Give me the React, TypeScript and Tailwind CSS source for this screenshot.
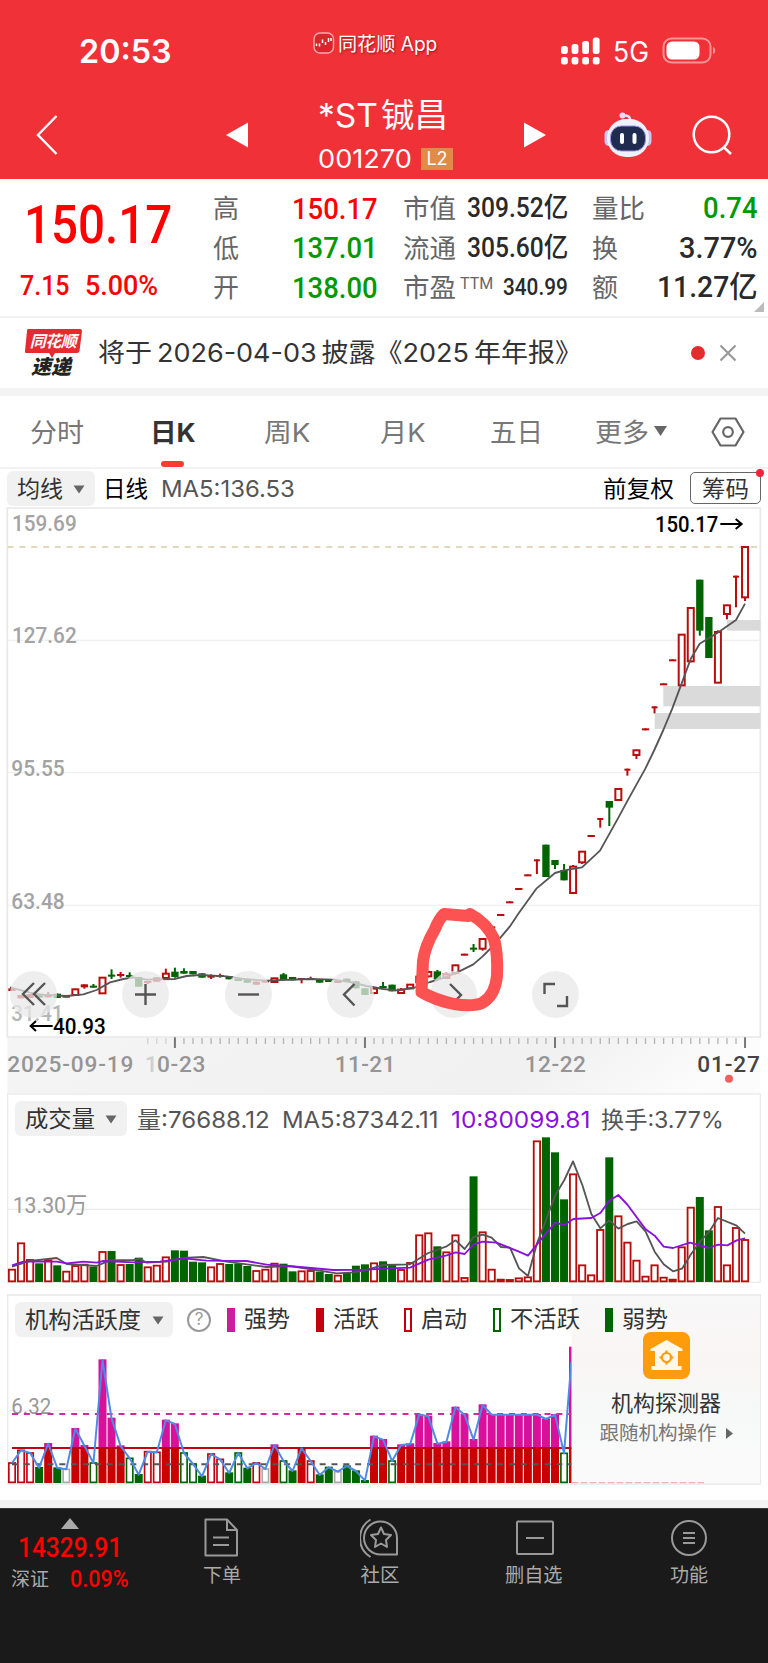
import { useLayoutEffect, useRef, useState } from "react";
import type { ReactNode } from "react";

// Text squeezed or stretched to a fixed width, like the condensed digits of the quote font
function Fit({ w, className = "", children }: { w: number; className?: string; children: ReactNode }) {
  const ref = useRef<HTMLSpanElement>(null);
  const [scale, setScale] = useState(1);

  useLayoutEffect(() => {
    if (ref.current) setScale(w / ref.current.offsetWidth);
  }, [w, children]);

  return (
    <span className={`inline-block shrink-0 leading-none ${className}`} style={{ width: w }}>
      <span ref={ref} className="inline-block whitespace-nowrap origin-left" style={{ transform: `scaleX(${scale})` }}>
        {children}
      </span>
    </span>
  );
}

function Caret({ className = "" }: { className?: string }) {
  return (
    <svg viewBox="0 0 12 9" className={`shrink-0 w-3 h-[9px] ${className}`}>
      <path d="M0.5 0.5h11L6 8.5z" fill="#666" />
    </svg>
  );
}

// All charts use 3 units per pixel; candle i is centred at cx(i)
const cx = (i: number) => 36 + 27.15 * i;

// [kind, body top, body bottom, high, low]  g = falling, r = small rising, t = flat top with wick, h = hollow rising
type Candle = [string, number, number, number, number];
const candles: Candle[] = [
  ["r", 1465, 1473, 1465, 1473], ["r", 1485, 1495, 1485, 1495], ["r", 1482, 1494, 1482, 1494], ["g", 1481, 1493, 1481, 1493],
  ["r", 1483, 1492, 1476, 1492], ["g", 1481, 1494, 1481, 1494], ["r", 1487, 1492, 1487, 1492], ["h", 1466, 1486, 1466, 1486],
  ["r", 1453, 1462, 1453, 1466], ["g", 1457, 1461, 1452, 1463], ["h", 1431, 1481, 1431, 1481], ["g", 1424, 1429, 1408, 1437],
  ["r", 1422, 1428, 1416, 1433], ["g", 1425, 1430, 1417, 1432], ["g", 1431, 1460, 1431, 1460], ["r", 1443, 1449, 1443, 1452],
  ["r", 1432, 1445, 1432, 1445], ["h", 1419, 1435, 1406, 1438], ["g", 1415, 1431, 1403, 1433], ["g", 1413, 1421, 1405, 1421],
  ["g", 1413, 1423, 1413, 1423], ["g", 1420, 1433, 1420, 1433], ["r", 1427, 1432, 1423, 1437], ["r", 1425, 1430, 1421, 1433],
  ["g", 1429, 1438, 1429, 1438], ["g", 1436, 1443, 1436, 1443], ["g", 1436, 1448, 1436, 1448], ["r", 1445, 1454, 1445, 1454],
  ["r", 1442, 1448, 1442, 1448], ["h", 1433, 1447, 1433, 1449], ["g", 1423, 1440, 1419, 1440], ["g", 1431, 1441, 1431, 1441],
  ["r", 1434, 1440, 1434, 1450], ["r", 1434, 1439, 1430, 1439], ["g", 1440, 1448, 1440, 1448], ["g", 1439, 1446, 1439, 1446],
  ["r", 1443, 1449, 1443, 1449], ["g", 1436, 1446, 1436, 1446], ["g", 1444, 1465, 1444, 1465], ["g", 1465, 1485, 1465, 1485],
  ["h", 1464, 1480, 1464, 1483], ["g", 1458, 1464, 1446, 1464], ["g", 1454, 1474, 1454, 1474], ["h", 1467, 1480, 1464, 1480],
  ["h", 1452, 1466, 1452, 1466], ["h", 1428, 1448, 1424, 1448], ["h", 1414, 1430, 1412, 1432], ["g", 1414, 1438, 1410, 1441],
  ["h", 1421, 1435, 1417, 1437], ["h", 1394, 1420, 1394, 1424], ["r", 1361, 1366, 1361, 1366], ["g", 1343, 1348, 1332, 1356],
  ["h", 1315, 1347, 1315, 1352], ["r", 1279, 1284, 1279, 1284], ["r", 1242, 1247, 1242, 1247], ["r", 1204, 1209, 1204, 1209],
  ["r", 1164, 1169, 1164, 1169], ["r", 1123, 1128, 1123, 1128], ["t", 1078, 1083, 1078, 1122], ["g", 1034, 1131, 1034, 1131],
  ["g", 1080, 1095, 1080, 1107], ["g", 1110, 1141, 1092, 1141], ["h", 1098, 1180, 1095, 1180], ["h", 1053, 1088, 1053, 1092],
  ["r", 1005, 1010, 1005, 1010], ["t", 954, 959, 954, 983], ["g", 903, 923, 903, 978], ["h", 865, 901, 865, 901],
  ["t", 806, 811, 806, 827], ["h", 749, 766, 749, 777], ["r", 685, 691, 685, 691], ["t", 619, 625, 619, 640],
  ["r", 550, 555, 550, 555], ["r", 478, 483, 478, 483], ["h", 402, 557, 402, 557], ["h", 322, 485, 322, 487],
  ["g", 239, 392, 239, 407], ["g", 351, 474, 351, 474], ["h", 394, 549, 391, 549], ["h", 314, 343, 314, 358],
  ["t", 227, 232, 227, 322], ["h", 139, 293, 139, 303],
];

const priceMa =
  "30,1462 90,1478 117,1484 200,1488 250,1483 290,1470 330,1447 370,1437 400,1432 440,1439 523,1437 560,1428 600,1425 680,1429 740,1438 800,1442 930,1437 1000,1439 1050,1446 1100,1458 1150,1467 1190,1471 1240,1464 1290,1446 1312,1440 1366,1420 1420,1393 1447,1370 1470,1347 1502,1312 1529,1280 1556,1240 1610,1165 1665,1119 1692,1111 1746,1102 1800,1052 1854,955 1881,905 1936,806 1963,750 1990,690 2017,625 2045,550 2072,477 2099,431 2153,398 2208,360 2235,311";

// [colour, bar top]
const volumes: [string, number][] = [
  ["r", 552], ["r", 473], ["r", 523], ["g", 535], ["r", 524], ["g", 541], ["r", 558], ["r", 541], ["r", 537], ["g", 545],
  ["r", 499], ["g", 498], ["r", 538], ["g", 537], ["g", 518], ["r", 545], ["r", 540], ["r", 515], ["g", 496], ["g", 497],
  ["g", 530], ["g", 532], ["r", 545], ["r", 535], ["g", 537], ["g", 536], ["g", 543], ["r", 556], ["r", 552], ["r", 534],
  ["g", 536], ["g", 559], ["r", 557], ["r", 556], ["g", 560], ["g", 567], ["r", 570], ["g", 563], ["g", 542], ["g", 538],
  ["r", 533], ["g", 529], ["g", 538], ["r", 553], ["r", 532], ["r", 449], ["r", 443], ["g", 484], ["r", 500], ["r", 449],
  ["r", 577], ["g", 274], ["r", 440], ["r", 552], ["r", 582], ["r", 583], ["r", 578], ["r", 575], ["r", 167], ["g", 157],
  ["g", 202], ["g", 343], ["r", 266], ["r", 539], ["r", 569], ["r", 433], ["g", 217], ["r", 392], ["r", 471], ["r", 525],
  ["r", 573], ["r", 539], ["r", 576], ["r", 582], ["r", 485], ["r", 366], ["g", 336], ["g", 436], ["r", 364], ["r", 539],
  ["r", 427], ["r", 463],
];

const volMa5 =
  "36,545 90,528 170,519 200,537 290,543 330,526 400,525 420,521 440,533 500,530 550,519 610,516 680,530 800,546 870,543 1010,565 1060,562 1100,555 1150,540 1230,538 1285,504 1340,484 1367,466 1394,492 1421,456 1448,449 1475,458 1503,486 1530,488 1557,550 1584,573 1611,475 1638,405 1666,330 1693,285 1719,229 1747,300 1774,387 1801,430 1828,406 1855,431 1883,417 1910,409 1937,440 1964,500 1991,538 2019,559 2046,551 2073,508 2100,470 2127,441 2154,399 2210,422 2235,446";
const volMa10 =
  "36,541 70,530 170,530 200,535 250,530 290,533 310,528 400,532 480,530 550,520 620,527 740,528 800,539 900,546 1000,555 1100,554 1170,550 1230,548 1285,524 1340,511 1367,502 1394,507 1421,478 1448,470 1490,473 1557,500 1584,512 1611,478 1638,445 1666,413 1693,420 1720,402 1774,399 1801,384 1828,347 1855,330 1883,360 1937,433 1964,452 1991,485 2019,489 2070,473 2127,489 2154,479 2182,481 2210,466 2235,460";

// m = strong, s = start (hollow red), i = inactive (hollow green), g = weak, w = none
const activity: [string, number][] = [
  ["s", 532], ["s", 494], ["s", 502], ["g", 546], ["m", 474], ["g", 547], ["w", 551], ["m", 429], ["m", 480], ["i", 532],
  ["m", 223], ["m", 398], ["m", 481], ["i", 518], ["g", 567], ["s", 498], ["s", 500], ["m", 404], ["m", 415], ["i", 502],
  ["i", 535], ["g", 572], ["s", 505], ["s", 521], ["g", 562], ["i", 502], ["g", 548], ["s", 532], ["w", 550], ["m", 478],
  ["i", 526], ["g", 556], ["m", 488], ["s", 526], ["g", 568], ["g", 545], ["w", 558], ["g", 541], ["g", 556], ["g", 585],
  ["m", 452], ["m", 462], ["i", 526], ["m", 478], ["m", 475], ["m", 387], ["m", 392], ["m", 474], ["m", 469], ["m", 365],
  ["m", 387], ["m", 462], ["m", 358], ["m", 387], ["m", 387], ["m", 387], ["m", 387], ["m", 387], ["m", 387], ["m", 400],
  ["m", 387], ["i", 503],
];
const outline: Record<string, string> = { s: "#c4000f", i: "#006400", w: "#aaaaaa" };

function PriceChart() {
  return (
    <svg viewBox="0 21 2304 1758" className="block w-[768px] h-[586px]">
      <defs>
        <linearGradient id="axis" x1="0" x2="1" y1="0" y2="0.1">
          <stop offset="0" stopColor="#f4f4f4" />
          <stop offset="0.75" stopColor="#f1f1f1" />
          <stop offset="1" stopColor="#fcfcfc" />
        </linearGradient>
      </defs>
      <rect x="22" y="1612" width="2259" height="168" fill="url(#axis)" />
      <g fill="none" stroke="#e8e8e8" strokeWidth="5">
        <path d="M22 24H2281V1611H22z" />
        <path d="M22 421H2281M22 818H2281M22 1216H2281" stroke="#f0f0f0" strokeWidth="4" />
      </g>
      <g fill="#dadada">
        <rect x="2181" y="360" width="100" height="32" />
        <rect x="1990" y="558" width="291" height="61" />
        <rect x="1964" y="639" width="317" height="48" />
      </g>
      <path d="M23 141H2281" stroke="#dccba6" strokeWidth="4" strokeDasharray="18 17.4" />

      <g fontFamily="Roboto" fontSize="67" fontWeight="500" fill="#a3a3a3">
        <text x="36" y="94" textLength="194" lengthAdjust="spacingAndGlyphs">159.69</text>
        <text x="36" y="430" textLength="194" lengthAdjust="spacingAndGlyphs">127.62</text>
        <text x="34" y="828" textLength="160" lengthAdjust="spacingAndGlyphs">95.55</text>
        <text x="34" y="1226" textLength="160" lengthAdjust="spacingAndGlyphs">63.48</text>
        <text x="34" y="1562" textLength="156" lengthAdjust="spacingAndGlyphs" fill="#b5b5b5">31.41</text>
      </g>

      {candles.map(([kind, top, bottom, high, low], i) => {
        const x = cx(i);
        const color = kind === "g" ? "#006400" : "#b90c0c";
        if (kind === "h") {
          return (
            <g key={i} stroke={color} strokeWidth="6" fill="#fff">
              <path d={`M${x} ${high}V${low}`} />
              <rect x={x - 9} y={top + 2} width="18" height={bottom - top - 3} />
            </g>
          );
        }
        const half = kind === "t" ? 9 : 11;
        return (
          <g key={i} fill={color}>
            <rect x={x - half} y={top} width={half * 2} height={Math.max(bottom - top, 6)} />
            <rect x={x - 3} y={high} width="6" height={low - high} />
          </g>
        );
      })}
      <polyline points={priceMa} fill="none" stroke="#555" strokeWidth="5.5" strokeLinejoin="round" />

      <g fontFamily="Roboto" fontWeight="500" fontSize="68" fill="#000">
        <text x="1965" y="97" textLength="190" lengthAdjust="spacingAndGlyphs">150.17</text>
        <text x="159" y="1602" textLength="158" lengthAdjust="spacingAndGlyphs">40.93</text>
      </g>
      <g fill="none" stroke="#000" strokeWidth="6">
        <path d="M2161 72H2225M2207 57L2225 72L2207 87" />
        <path d="M158 1578H92M108 1563L92 1578L108 1593" />
      </g>

      {/* Date axis */}
      <g stroke="#b4b4b4" strokeWidth="4">
        {candles.map((_, i) =>
          i < 15 ? null : (
            <path key={i} d={`M${cx(i)} 1614V1632`} opacity={i < 18 ? 0.5 : 1} />
          )
        )}
        {[18, 39, 60, 81].map((i) => (
          <path key={i} d={`M${cx(i)} 1612V1644`} stroke="#777" strokeWidth="6" />
        ))}
      </g>
      <g fontFamily="Roboto" fontSize="68" fontWeight="500" fill="#959595">
        <text x="22" y="1717" textLength="378" lengthAdjust="spacing">2025-09-19</text>
        <text x="434" y="1717" fill="#cfcfcf">1</text>
        <text x="471" y="1717" textLength="145" lengthAdjust="spacing">0-23</text>
        <text x="1004" y="1717" textLength="182" lengthAdjust="spacing">11-21</text>
        <text x="1574" y="1717" textLength="184" lengthAdjust="spacing">12-22</text>
        <text x="2092" y="1717" textLength="188" lengthAdjust="spacing" fill="#444">01-27</text>
      </g>
      <circle cx="2187" cy="1736" r="12" fill="#ef6060" />
    </svg>
  );
}

const tools = [
  { left: "left-[10px]", d: "M35 20L24 31L35 42M24 20L13 31L24 42", vb: "0 8 47 47" },
  { left: "left-[122px]", d: "M13 23.5H34M23.5 13V34", vb: "0 0 47 47" },
  { left: "left-[225px]", d: "M13 23.5H34", vb: "0 0 47 47" },
  { left: "left-[327px]", d: "M27.5 13L17 23.5L27.5 34.5", vb: "0 0 47 47" },
  { left: "left-[430px]", d: "M20 13L31 24L20 35", vb: "0 0 47 47" },
  { left: "left-[532px]", d: "M12.5 23V13H23M25 35H35V25", vb: "0 0 47 47" },
];

function VolumeChart() {
  return (
    <svg viewBox="0 24 2304 600" className="block w-[768px] h-[200px]">
      <g fill="none" stroke="#ebebeb" strokeWidth="4">
        <path d="M23 27V592H2281V27z" />
        <path d="M23 373H2281" />
      </g>
      <text x="38" y="383" fontFamily="Roboto, 'Noto Sans CJK SC'" fontSize="68" fill="#999" textLength="224" lengthAdjust="spacingAndGlyphs">
        13.30万
      </text>
      {volumes.map(([kind, top], i) =>
        kind === "g" ? (
          <rect key={i} x={cx(i) - 12} y={top} width="24" height={591 - top} fill="#006400" />
        ) : (
          <rect key={i} x={cx(i) - 9.5} y={top + 2} width="19" height={Math.max(587 - top, 4)} fill="#fff" stroke="#b90c0c" strokeWidth="5.5" />
        )
      )}
      <g fill="none" strokeWidth="5.5" strokeLinejoin="round">
        <polyline points={volMa5} stroke="#555" />
        <polyline points={volMa10} stroke="#8a10dc" />
      </g>
    </svg>
  );
}

function ActivityChart() {
  return (
    <svg viewBox="0 24 2304 582" className="block w-[768px] h-[194px]">
      <defs>
        <linearGradient id="promo" x1="0" x2="0" y1="0" y2="1">
          <stop offset="0" stopColor="#f8f8f8" />
          <stop offset="0.36" stopColor="#faf5f5" />
          <stop offset="0.6" stopColor="#f6f9f8" />
          <stop offset="0.85" stopColor="#fafafa" />
          <stop offset="1" stopColor="#fafafa" />
        </linearGradient>
      </defs>
      <g fill="none" stroke="#e8e8e8" strokeWidth="4">
        <path d="M23 30H2281V597H23z" />
        <path d="M23 377H2281" stroke="#f0f0f0" />
      </g>
      <text x="34" y="386" fontFamily="Roboto" fontSize="68" fill="#999" textLength="120" lengthAdjust="spacingAndGlyphs">
        6.32
      </text>
      {activity.map(([kind, top], i) => {
        const x = cx(i);
        if (kind === "m") {
          return (
            <g key={i}>
              <rect x={x - 12} y={top} width="24" height={490 - top} fill="#d8109c" />
              <rect x={x - 12} y="489" width="24" height="105" fill="#c80000" />
            </g>
          );
        }
        if (kind === "g") return <rect key={i} x={x - 12} y={top} width="24" height={594 - top} fill="#006400" />;
        return <rect key={i} x={x - 9.5} y={top + 2} width="19" height={590 - top} fill="#fff" stroke={outline[kind]} strokeWidth="5" />;
      })}
      <rect x="1707" y="185" width="8" height="304" fill="#d8109c" />
      <rect x="1707" y="489" width="8" height="105" fill="#c80000" />
      <g fill="none" strokeWidth="6">
        <path d="M36 489H1715" stroke="#c4000f" />
        <path d="M36 387H1715" stroke="#cf2aa0" strokeDasharray="18 17.5" />
        <path d="M36 538H1715" stroke="#555" strokeDasharray="18 17.5" />
        <polyline
          points={activity.map(([, top], i) => `${cx(i)},${top + 2}`).join(" ") + " 1714,230"}
          stroke="#4f8be6"
          strokeLinejoin="round"
        />
      </g>
      <rect x="1715" y="33" width="564" height="562" fill="url(#promo)" />
      <path d="M1715 593H2112" stroke="#eab4b8" strokeWidth="4" strokeDasharray="20 7" />
    </svg>
  );
}

function Robot() {
  return (
    <svg viewBox="0 0 48 46" className="shrink-0 w-12 h-[46px]">
      <circle cx="18.5" cy="3.5" r="3" fill="#e6dcf8" />
      <path d="M19 3.5C24 3 26.5 5 26 9" fill="none" stroke="#dfe0f5" strokeWidth="2.5" />
      <rect x="0.5" y="18" width="9" height="16" rx="4.5" fill="#c9c6f3" />
      <rect x="38.5" y="18" width="9" height="16" rx="4.5" fill="#c9c6f3" />
      <rect x="3" y="7" width="42" height="38" rx="19" fill="#eef0fb" />
      <rect x="6.5" y="14" width="35" height="25" rx="11" fill="#1f2c50" stroke="#9a8fe8" strokeWidth="1" />
      <rect x="16" y="21" width="4" height="11" rx="2" fill="#fff" />
      <rect x="28.5" y="21" width="4" height="11" rx="2" fill="#fff" />
    </svg>
  );
}

const signal = [
  { x: 0, y: 9, h: 8 },
  { x: 10.6, y: 7, h: 10 },
  { x: 21.2, y: 4, h: 13 },
  { x: 31.8, y: 0.5, h: 16.5 },
];

function Header() {
  return (
    <div className="h-[179px] shrink-0 bg-[#f03138] text-white">
      {/* Status bar */}
      <div className="h-[90px] flex items-start">
        <Fit w={93} className="ml-[79px] mt-[35px] text-[33px] font-semibold">20:53</Fit>
        <svg viewBox="0 0 22 22" className="ml-[141px] mt-8 w-[22px] h-[22px]">
          <rect x="1" y="1" width="19.5" height="20" rx="6" fill="#d9252c" stroke="#f9a9ac" strokeWidth="1.4" />
          <path d="M3.5 14v-2.5M6.5 14.5v-3M9.5 11v-3.5M12.5 13v-3M15.5 10v-4M18 9v-3" stroke="#fff" strokeWidth="1.5" />
        </svg>
        <Fit w={99} className="ml-[3px] mt-[35px] text-[19.5px] [text-shadow:1px_1px_2px_rgba(90,0,0,0.6)]">同花顺 App</Fit>
        <svg viewBox="0 0 39 28" className="ml-[124px] mt-[37px] w-[39px] h-7" fill="#fff">
          {signal.map((s) => (
            <g key={s.x}>
              <rect x={s.x} y={s.y} width="6.8" height={s.h} rx="2.5" />
              <rect x={s.x} y="20" width="6.8" height="7.5" rx="2.5" />
            </g>
          ))}
        </svg>
        <Fit w={36} className="ml-[13px] mt-[38px] text-[28px]">5G</Fit>
        <svg viewBox="0 0 54 27" className="ml-[13px] mt-[37px] w-[54px] h-[27px]">
          <rect x="1.5" y="1.5" width="47" height="24" rx="8" fill="none" stroke="#f79497" strokeWidth="2" />
          <rect x="4.5" y="4.5" width="33" height="18" rx="5.5" fill="#fff" />
          <path d="M51 10c3 1 3 6 0 7z" fill="#f79497" />
        </svg>
      </div>

      {/* Title bar */}
      <div className="h-[89px] flex items-start">
        <svg viewBox="0 0 22 40" className="ml-9 mt-[25px] w-[22px] h-10">
          <path d="M20.5 1L2 20L20.5 39" fill="none" stroke="#fff" strokeWidth="2.4" />
        </svg>
        <svg viewBox="0 0 22 26" className="ml-[168px] mt-8 w-[22px] h-[26px]">
          <path d="M22 0.5V25.5L0 13z" fill="#fff" />
        </svg>
        <div className="ml-[70px] w-[136px] pt-[9px] flex flex-col">
          <Fit w={130} className="text-[33px]">*ST&#8202;铖昌</Fit>
          <div className="mt-[14px] flex items-center">
            <Fit w={94} className="text-[26px]">001270</Fit>
            <span className="ml-[9px] w-8 h-[22px] bg-[#e08b48] flex items-center justify-center text-lg leading-none">L2</span>
          </div>
        </div>
        <svg viewBox="0 0 22 26" className="ml-[70px] mt-8 w-[22px] h-[26px]">
          <path d="M0 0.5V25.5L22 13z" fill="#fff" />
        </svg>
        <div className="ml-[58px] mt-[22px]"><Robot /></div>
        <svg viewBox="0 0 40 40" className="ml-10 mt-[25px] w-10 h-10" fill="none" stroke="#fff" strokeWidth="2.5">
          <circle cx="19.5" cy="19.5" r="17.8" />
          <path d="M31.5 32L39 39" />
        </svg>
      </div>
    </div>
  );
}

const stats = [
  { label: "高", value: "150.17", color: "text-[#f00]", cap: "市值", amount: "309.52亿", last: "量比", lastW: 53, end: "0.74", endW: 55, endColor: "text-[#090]" },
  { label: "低", value: "137.01", color: "text-[#090]", cap: "流通", amount: "305.60亿", last: "换", lastW: 26, end: "3.77%", endW: 79, endColor: "text-[#2a2a2a]" },
  { label: "开", value: "138.00", color: "text-[#090]", cap: "市盈", amount: "", last: "额", lastW: 26, end: "11.27亿", endW: 101, endColor: "text-[#2a2a2a]" },
];

function Quote() {
  return (
    <div className="relative h-[139px] shrink-0 flex bg-white font-[Roboto,'Noto_Sans_CJK_SC',sans-serif] border-b-2 border-[#f2f2f2]">
      <div className="w-[213px] pl-5 pt-5 text-[#f00]">
        <Fit w={148} className="ml-1 text-[53px] font-medium">150.17</Fit>
        <div className="mt-5 flex font-medium text-[28px]">
          <Fit w={50}>7.15</Fit>
          <Fit w={73} className="ml-[15px]">5.00%</Fit>
        </div>
      </div>
      <div className="flex-1 pt-[10px] pr-[10px]">
        {stats.map((s) => (
          <div key={s.label} className="h-[39.5px] flex items-center text-[#666] text-[26px] leading-none">
            <Fit w={26} className="mt-px">{s.label}</Fit>
            <Fit w={86} className={`ml-[53px] text-[30px] font-medium ${s.color}`}>{s.value}</Fit>
            <Fit w={53} className="ml-[25px] mt-px">{s.cap}</Fit>
            {s.amount ? (
              <Fit w={101} className="ml-[11px] text-[27px] font-medium text-[#2a2a2a]">{s.amount}</Fit>
            ) : (
              <>
                <Fit w={33} className="ml-1 -mt-2 text-[17px]">TTM</Fit>
                <Fit w={65} className="ml-[10px] text-[23px] font-medium text-[#2a2a2a]">340.99</Fit>
              </>
            )}
            <Fit w={s.lastW} className="ml-6 mt-px">{s.last}</Fit>
            <Fit w={s.endW} className={`ml-auto -mt-px font-medium text-[30px] ${s.endColor}`}>{s.end}</Fit>
          </div>
        ))}
      </div>
      <svg viewBox="0 0 10 10" className="absolute right-1 bottom-1 w-2.5 h-2.5">
        <path d="M10 0V10H0z" fill="#bbb" />
      </svg>
    </div>
  );
}

function Notice() {
  return (
    <div className="h-[78px] shrink-0 flex items-center bg-white border-b-8 border-[#f4f4f4]">
      <div className="ml-[23px] w-[60px] flex flex-col items-center">
        <div className="relative w-[58px] h-6 flex items-center justify-center">
          <svg viewBox="0 0 58 29" className="absolute left-0 top-0 w-[58px] h-[29px]">
            <path d="M4 0H56Q58 0 58 2L55.5 22Q55 24 53 24H31L28 29L25 24H3Q0.5 24 1 22L3 2Q3 0 4 0z" fill="#e52a30" />
          </svg>
          <span className="relative text-white italic font-bold text-[16px] leading-none tracking-[-0.5px] whitespace-nowrap">同花顺</span>
        </div>
        <span className="mt-1 -ml-1 text-[#222] italic font-black text-[20px] leading-none whitespace-nowrap">速递</span>
      </div>
      <Fit w={484} className="ml-[15px] text-[26px] text-[#333]">将于&#8201;2026-04-03&#8201;披露《2025&#8201;年年报》</Fit>
      <span className="ml-[109px] -mt-px w-3.5 h-3.5 shrink-0 rounded-full bg-[#e62b2e]" />
      <svg viewBox="0 0 18 18" className="ml-[14px] -mt-px w-[18px] h-[18px]">
        <path d="M1.5 1.5L16.5 16.5M16.5 1.5L1.5 16.5" stroke="#999" strokeWidth="2.2" />
      </svg>
    </div>
  );
}

function Tabs() {
  return (
    <div className="h-[73px] shrink-0 pt-[3px] flex items-center bg-white text-[26px] text-[#777] border-b-2 border-[#f2f2f2]">
      <Fit w={54} className="ml-[30px]">分时</Fit>
      <div className="relative ml-[66px] flex">
        <Fit w={46} className="font-bold text-[#333]">日K</Fit>
        <span className="absolute left-[11px] top-[41px] w-[23px] h-1.5 rounded-sm bg-[#fa3c32]" />
      </div>
      <Fit w={46} className="ml-[68px]">周K</Fit>
      <Fit w={45} className="ml-[70px]">月K</Fit>
      <Fit w={53} className="ml-[65px]">五日</Fit>
      <Fit w={54} className="ml-[52px]">更多</Fit>
      <svg viewBox="0 0 13 10" className="ml-[5px] -mt-1 w-[13px] h-2.5">
        <path d="M0 0H13L6.5 10z" fill="#666" />
      </svg>
      <svg viewBox="0 0 34 30" className="ml-[44px] -mt-0.5 w-[34px] h-[30px]" fill="none" stroke="#666" strokeWidth="2.2">
        <path d="M9.5 1.5H24.5L32.5 15L24.5 28.5H9.5L1.5 15z" strokeLinejoin="round" />
        <circle cx="17" cy="15" r="4.8" />
      </svg>
    </div>
  );
}

const legend = [
  { label: "强势", w: 46, mark: "bg-[#cc1e9c]", gap: "ml-[16px]" },
  { label: "活跃", w: 46, mark: "bg-[#c4000f]", gap: "ml-[26px]" },
  { label: "启动", w: 46, mark: "border-2 border-[#c4000f]", gap: "ml-[25px]" },
  { label: "不活跃", w: 70, mark: "border-2 border-[#006400]", gap: "ml-[26px]" },
  { label: "弱势", w: 46, mark: "bg-[#006400]", gap: "ml-[25px]" },
];

function BottomBar() {
  const icon = "w-10 h-10";
  return (
    <div className="h-[155px] shrink-0 flex bg-[#1a1a1a] border-t border-[#3a3a3a] text-[#aaa]">
      <div className="w-[139px] pt-[9px] flex flex-col items-center font-[Roboto,'Noto_Sans_CJK_SC',sans-serif]">
        <svg viewBox="0 0 18 11" className="w-[18px] h-[11px]">
          <path d="M9 0L18 11H0z" fill="#aaa" />
        </svg>
        <Fit w={104} className="mt-[5px] text-[28px] font-medium text-[#f00]">14329.91</Fit>
        <div className="mt-[6px] flex items-center">
          <Fit w={38} className="text-[19.5px]">深证</Fit>
          <Fit w={59} className="ml-[21px] text-[23px] font-medium text-[#f00]">0.09%</Fit>
        </div>
      </div>
      <div className="ml-[53px] w-[60px] pt-[9px] flex flex-col items-center">
        <svg viewBox="2 0 40 40" className={icon} fill="none" stroke="#999" strokeWidth="2">
          <path d="M5.5 1.5H27L37 12V37.5H5.5z" strokeLinejoin="round" />
          <path d="M27 1.5V12H37M13 19.5H29M13 27H29" />
        </svg>
        <Fit w={38} className="mt-2 text-[19.5px]">下单</Fit>
      </div>
      <div className="ml-[98px] w-[60px] pt-[9px] flex flex-col items-center">
        <svg viewBox="2 0 40 40" className={icon} fill="none" stroke="#999" strokeWidth="2">
          <path d="M12.5 1.5A22 22 0 0 0 12.5 39" />
          <path d="M39 36.5H23A16.5 16.5 0 1 1 39 20z" strokeLinejoin="round" />
          <path d="M23 9.5L26 16L33 17L28 22L29 29L23 25.5L17 29L18 22L13 17L20 16z" strokeLinejoin="round" />
        </svg>
        <Fit w={39} className="mt-2 text-[19.5px]">社区</Fit>
      </div>
      <div className="ml-[93px] w-[62px] pt-[9px] flex flex-col items-center">
        <svg viewBox="-2 0 40 40" className={icon} fill="none" stroke="#999" strokeWidth="2">
          <rect x="1" y="3.5" width="36" height="32.5" rx="1" />
          <path d="M10 20H28" />
        </svg>
        <Fit w={58} className="mt-2 text-[19.5px]">删自选</Fit>
      </div>
      <div className="ml-[94px] w-[60px] pt-[9px] flex flex-col items-center">
        <svg viewBox="0 0 40 40" className={icon} fill="none" stroke="#999" strokeWidth="2">
          <circle cx="20" cy="20" r="17" />
          <path d="M14 15H26M14 20H26M14 25H26" />
        </svg>
        <Fit w={38} className="mt-2 text-[19.5px]">功能</Fit>
      </div>
    </div>
  );
}

export default function App() {
  return (
    <div className="w-[768px] h-[1663px] overflow-hidden bg-white flex flex-col font-['Inter','Noto_Sans_CJK_SC',sans-serif]">
      <Header />
      <Quote />
      <Notice />
      <Tabs />

      {/* Moving average row */}
      <div className="h-[38px] shrink-0 flex items-center text-[23px] text-[#333]">
        <div className="ml-[7px] w-[88px] h-[35px] pl-[10px] pt-0.5 rounded-md bg-[#f1f1f1] flex items-center">
          <Fit w={46}>均线</Fit>
          <Caret className="ml-[10px]" />
        </div>
        <Fit w={45} className="ml-2 mt-0.5 text-black">日线</Fit>
        <Fit w={134} className="ml-[13px] mt-0.5 text-[#555]">MA5:136.53</Fit>
        <Fit w={71} className="ml-[308px] mt-0.5 text-black">前复权</Fit>
        <div className="relative ml-[16px] w-[71px] h-8 pt-0.5 border border-[#666] rounded-[5px] flex items-center justify-center">
          <Fit w={47}>筹码</Fit>
          <span className="absolute -right-1 -top-1 w-2 h-2 rounded-full bg-[#f0253a]" />
        </div>
      </div>

      {/* Daily candles */}
      <div className="relative h-[586px] shrink-0">
        <PriceChart />
        {tools.map((t) => (
          <button key={t.left} className={`absolute top-[464px] ${t.left} w-[47px] h-[47px] rounded-full bg-[#e8e8e8]/75`}>
            <svg viewBox={t.vb} className="w-[47px] h-[47px]">
              <path d={t.d} fill="none" stroke="#555" strokeWidth="2.4" />
            </svg>
          </button>
        ))}
        {/* Marker stroke over the breakout */}
        <svg viewBox="0 0 100 120" className="absolute left-[410px] top-[394px] w-[100px] h-[120px]">
          <path
            d="M58.5 15L34 13Q29 18 25 28Q15 45 13 60L11.5 91Q25 99 44 103Q63 106 72 102Q85 95 87 75Q88 52 84 38Q77 22 60 13"
            fill="none"
            stroke="#fd5252"
            strokeWidth="12"
            strokeLinecap="round"
            strokeLinejoin="round"
          />
        </svg>
      </div>

      {/* Volume */}
      <div className="relative h-[200px] shrink-0">
        <VolumeChart />
        <div className="absolute left-[15px] top-[8px] h-[35px] flex items-center text-[23px] text-[#555]">
          <div className="w-[112px] h-[35px] pl-[10px] pt-0.5 rounded-md bg-[#f1f1f1] text-[#333] flex items-center">
            <Fit w={70}>成交量</Fit>
            <Caret className="ml-[10px]" />
          </div>
          <Fit w={133} className="ml-[10px] mt-[3px]">量:76688.12</Fit>
          <Fit w={157} className="ml-[12px] mt-[3px]">MA5:87342.11</Fit>
          <Fit w={139} className="ml-[12px] mt-[3px] text-[#8a10dc]">10:80099.81</Fit>
          <Fit w={123} className="ml-[11px] mt-[3px]">换手:3.77%</Fit>
        </div>
      </div>

      {/* Institution activity */}
      <div className="relative h-[207px] shrink-0">
        <ActivityChart />
        <div className="absolute left-[15px] top-[9px] h-[35px] flex items-center text-[23px] text-[#333]">
          <div className="w-[158px] h-[35px] pl-[10px] pt-0.5 rounded-md bg-[#f1f1f1] flex items-center">
            <Fit w={116}>机构活跃度</Fit>
            <Caret className="ml-[11px]" />
          </div>
          <span className="ml-[14px] w-6 h-6 rounded-full border-2 border-[#999] text-[#999] text-[17px] leading-none flex items-center justify-center">?</span>
          {legend.map((l) => (
            <div key={l.label} className={`flex items-center ${l.gap}`}>
              <span className={`w-2 h-6 ${l.mark}`} />
              <Fit w={l.w} className="ml-[9px]">{l.label}</Fit>
            </div>
          ))}
        </div>
        <div className="absolute left-[572px] top-[39px] w-[188px] flex flex-col items-center">
          <svg viewBox="0 0 47 47" className="w-[47px] h-[47px]">
            <rect width="47" height="47" rx="8" fill="#ff9c0c" />
            <path d="M23.5 8L39.5 17V19H35V34H38.5V38H8.5V34H12V19H7.5V17z" fill="#fff7e8" />
            <circle cx="23.5" cy="25.5" r="4.5" fill="none" stroke="#ff9c0c" strokeWidth="2.2" />
            <path d="M23.5 18.5V22M23.5 29V32.5M16.5 25.5H20M27 25.5H30.5" stroke="#ff9c0c" strokeWidth="2.2" />
          </svg>
          <Fit w={110} className="mt-[13px] text-[22px] text-[#333]">机构探测器</Fit>
          <div className="mt-[10px] flex items-center text-[19.5px] text-[#777]">
            <Fit w={117}>跟随机构操作</Fit>
            <svg viewBox="0 0 7 11" className="ml-[9px] w-[7px] h-[11px]">
              <path d="M0 0L7 5.5L0 11z" fill="#666" />
            </svg>
          </div>
        </div>
      </div>

      <div className="h-2 shrink-0 bg-[#f4f4f4]" />
      <BottomBar />
    </div>
  );
}
